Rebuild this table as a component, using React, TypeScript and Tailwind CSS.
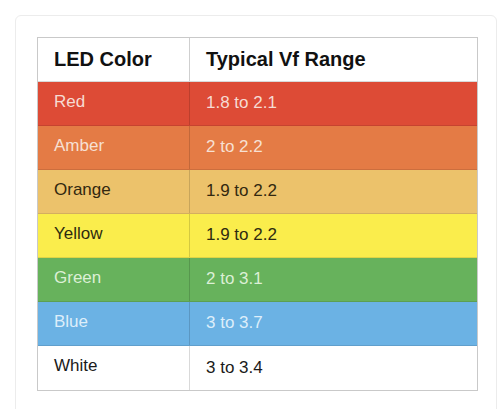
import React from "react";

const rows = [
  { name: "Red", range: "1.8 to 2.1", bg: "bg-[#dd4b36]", text: "text-[#f6dbd3]" },
  { name: "Amber", range: "2 to 2.2", bg: "bg-[#e47b45]", text: "text-[#f7e0d3]" },
  { name: "Orange", range: "1.9 to 2.2", bg: "bg-[#ecc26b]", text: "text-[#33280f]" },
  { name: "Yellow", range: "1.9 to 2.2", bg: "bg-[#faed4c]", text: "text-[#2e2b10]" },
  { name: "Green", range: "2 to 3.1", bg: "bg-[#67b25c]", text: "text-[#dcefd6]" },
  { name: "Blue", range: "3 to 3.7", bg: "bg-[#6bb2e4]", text: "text-[#ddeefa]" },
  { name: "White", range: "3 to 3.4", bg: "bg-white", text: "text-[#1a1a1a]" },
];

export default function App() {
  return (
    <div className="w-[501px] h-[409px] bg-white overflow-hidden font-['Liberation_Sans',Arial,sans-serif]">
      <div className="ml-[15px] mt-[15px] w-[482px] h-[420px] rounded-[6px] border border-[#ececec] bg-white pl-[21px] pt-[21px]">
        <div className="w-[441px] border border-[#c9c9c9]">
          <div className="flex h-[44px] bg-white border-b border-[#d9d9d9]">
            <div className="w-[152px] border-r border-[#cfcfcf] pl-[16px] flex items-center pb-[1px] text-[20px] font-bold text-[#111]">
              LED Color
            </div>
            <div className="flex-1 pl-[16px] flex items-center pb-[1px] text-[20px] font-bold text-[#111]">
              Typical Vf Range
            </div>
          </div>
          {rows.map((r, i) => (
            <div
              key={r.name}
              className={`flex h-[44px] ${r.bg} ${i < rows.length - 1 ? "border-b border-black/10" : ""}`}
            >
              <div className={`w-[152px] border-r border-black/15 pl-[16px] flex items-center pb-[4px] text-[17px] ${r.text}`}>
                {r.name}
              </div>
              <div className={`flex-1 pl-[16px] flex items-center pb-[1px] text-[17px] ${r.text}`}>
                {r.range}
              </div>
            </div>
          ))}
        </div>
      </div>
    </div>
  );
}
